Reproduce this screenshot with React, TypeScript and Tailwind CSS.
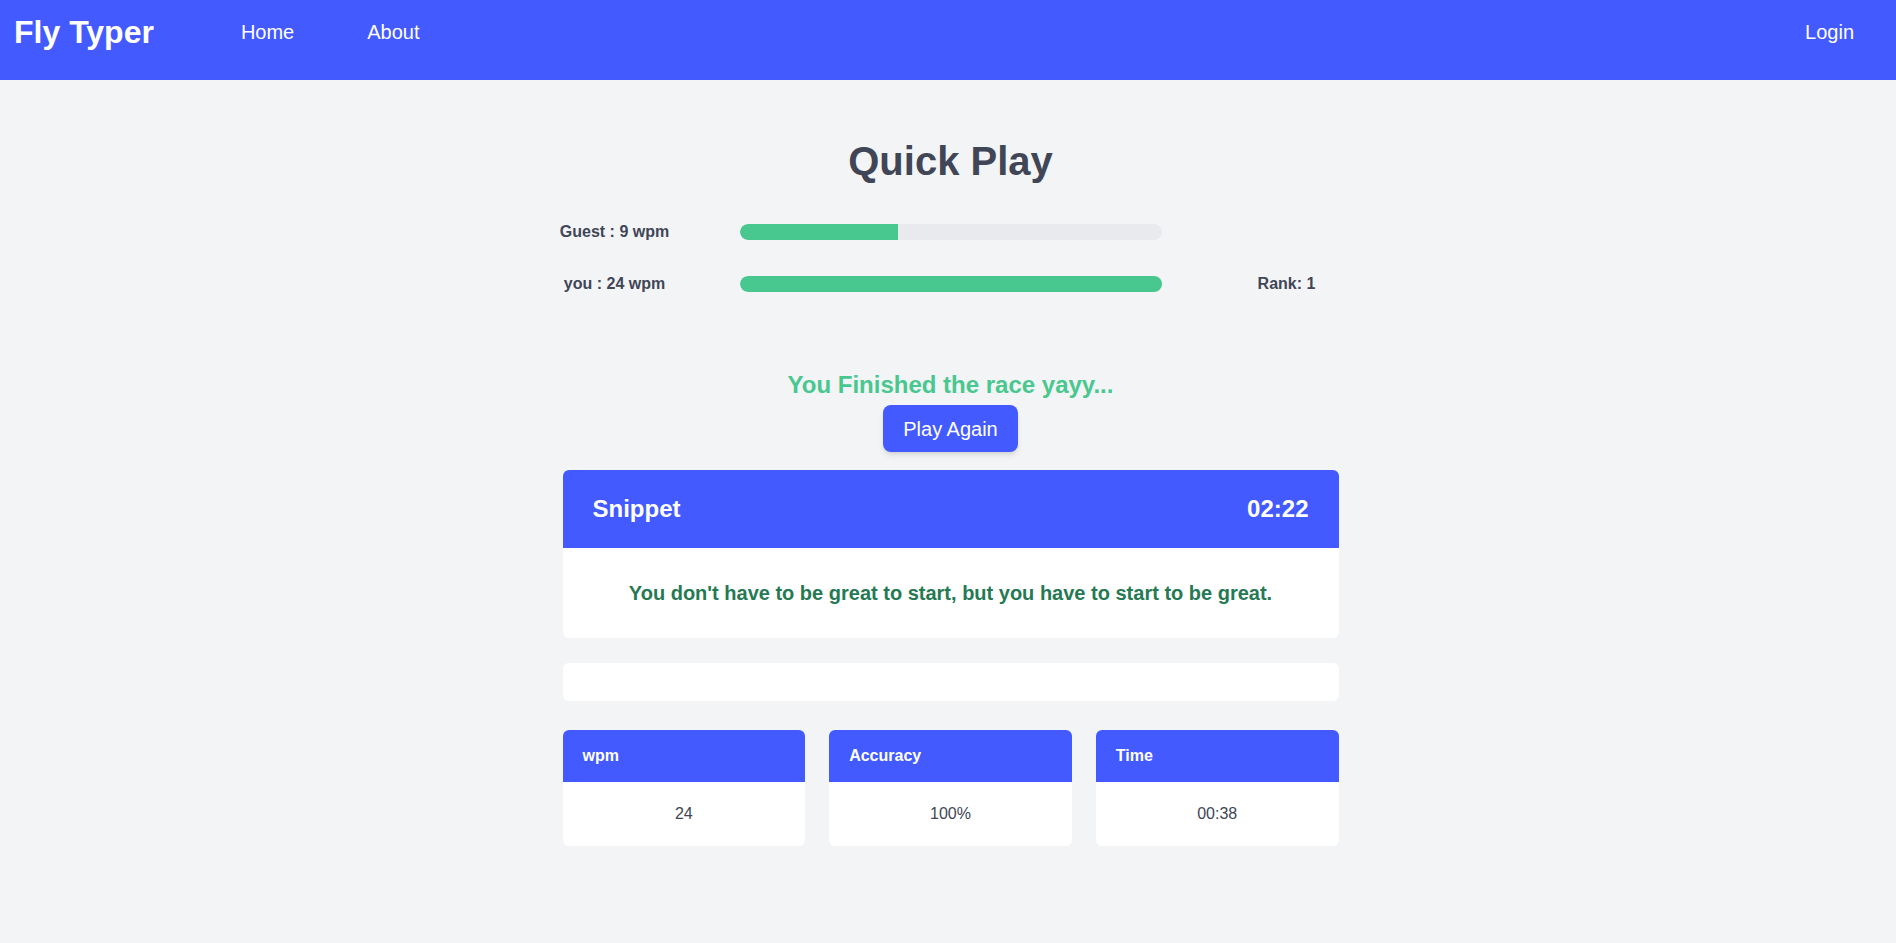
const players = [
  { name: "Guest", wpm: 9, progress: 37.5, rank: null as number | null },
  { name: "you", wpm: 24, progress: 100, rank: 1 },
];

const stats = [
  { label: "wpm", value: "24" },
  { label: "Accuracy", value: "100%" },
  { label: "Time", value: "00:38" },
];

function Navbar() {
  return (
    <nav className="h-[80px] bg-[#425aff] pl-[14px] pr-3 pt-[12px] text-white">
      <div className="flex h-10 items-center">
        <a href="#" className="text-[32px] font-bold leading-10">
          Fly Typer
        </a>
        <a href="#" className="ml-[87px] text-xl leading-7">
          Home
        </a>
        <a href="#" className="ml-[73px] text-xl leading-7">
          About
        </a>
        <a href="#" className="ml-auto mr-[30px] text-xl leading-7">
          Login
        </a>
      </div>
    </nav>
  );
}

function RaceTrack() {
  return (
    <div className="mt-[35px] flex flex-col gap-[28px]">
      {players.map((p) => (
        <div key={p.name} className="flex h-6 items-center text-base font-bold text-[#404656]">
          <div className="flex w-[104px] justify-center whitespace-nowrap">
            {p.name} : {p.wpm} wpm
          </div>
          <div className="ml-[73px] h-4 w-[422px] overflow-hidden rounded-full bg-[#e9eaee]">
            <div className="h-full rounded-l-full bg-[#48c78e]" style={{ width: `${p.progress}%` }} />
          </div>
          <div className="ml-[73px] flex w-[104px] justify-center whitespace-nowrap">
            {p.rank ? `Rank: ${p.rank}` : ""}
          </div>
        </div>
      ))}
    </div>
  );
}

export default function App() {
  return (
    <div className="min-h-screen bg-[#f3f4f6] font-['Liberation_Sans',Arial,sans-serif]">
      <Navbar />

      <div className="pl-[5px]">
        <main className="mx-auto w-[776px] pb-20">
          <h1 className="mt-[57px] text-center text-[40px] font-bold leading-[48px] text-[#404656]">Quick Play</h1>

          <RaceTrack />

          <div className="mt-[73px] flex flex-col items-center">
            <p className="text-2xl font-bold leading-8 text-[#48c78e]">You Finished the race yayy...</p>
            <button className="mt-1 h-[47px] rounded-lg bg-[#425aff] px-5 text-xl text-white shadow-md">
              Play Again
            </button>
          </div>

          <div className="mt-[18px] overflow-hidden rounded-md bg-white">
            <div className="flex h-[78px] items-center justify-between bg-[#425aff] px-[30px] text-2xl font-bold text-white">
              <span>Snippet</span>
              <span>02:22</span>
            </div>
            <div className="flex h-[90px] items-center justify-center text-xl font-bold text-[#257953]">
              You don't have to be great to start, but you have to start to be great.
            </div>
          </div>

          <input className="mt-[25px] block h-[38px] w-full rounded-md bg-white px-3 outline-none" />

          <div className="mt-[29px] grid grid-cols-3 gap-6">
            {stats.map((s) => (
              <div key={s.label} className="overflow-hidden rounded-md bg-white">
                <div className="flex h-[52px] items-center bg-[#425aff] px-5 font-bold text-white">{s.label}</div>
                <div className="flex h-16 items-center justify-center text-[#404656]">{s.value}</div>
              </div>
            ))}
          </div>
        </main>
      </div>
    </div>
  );
}
